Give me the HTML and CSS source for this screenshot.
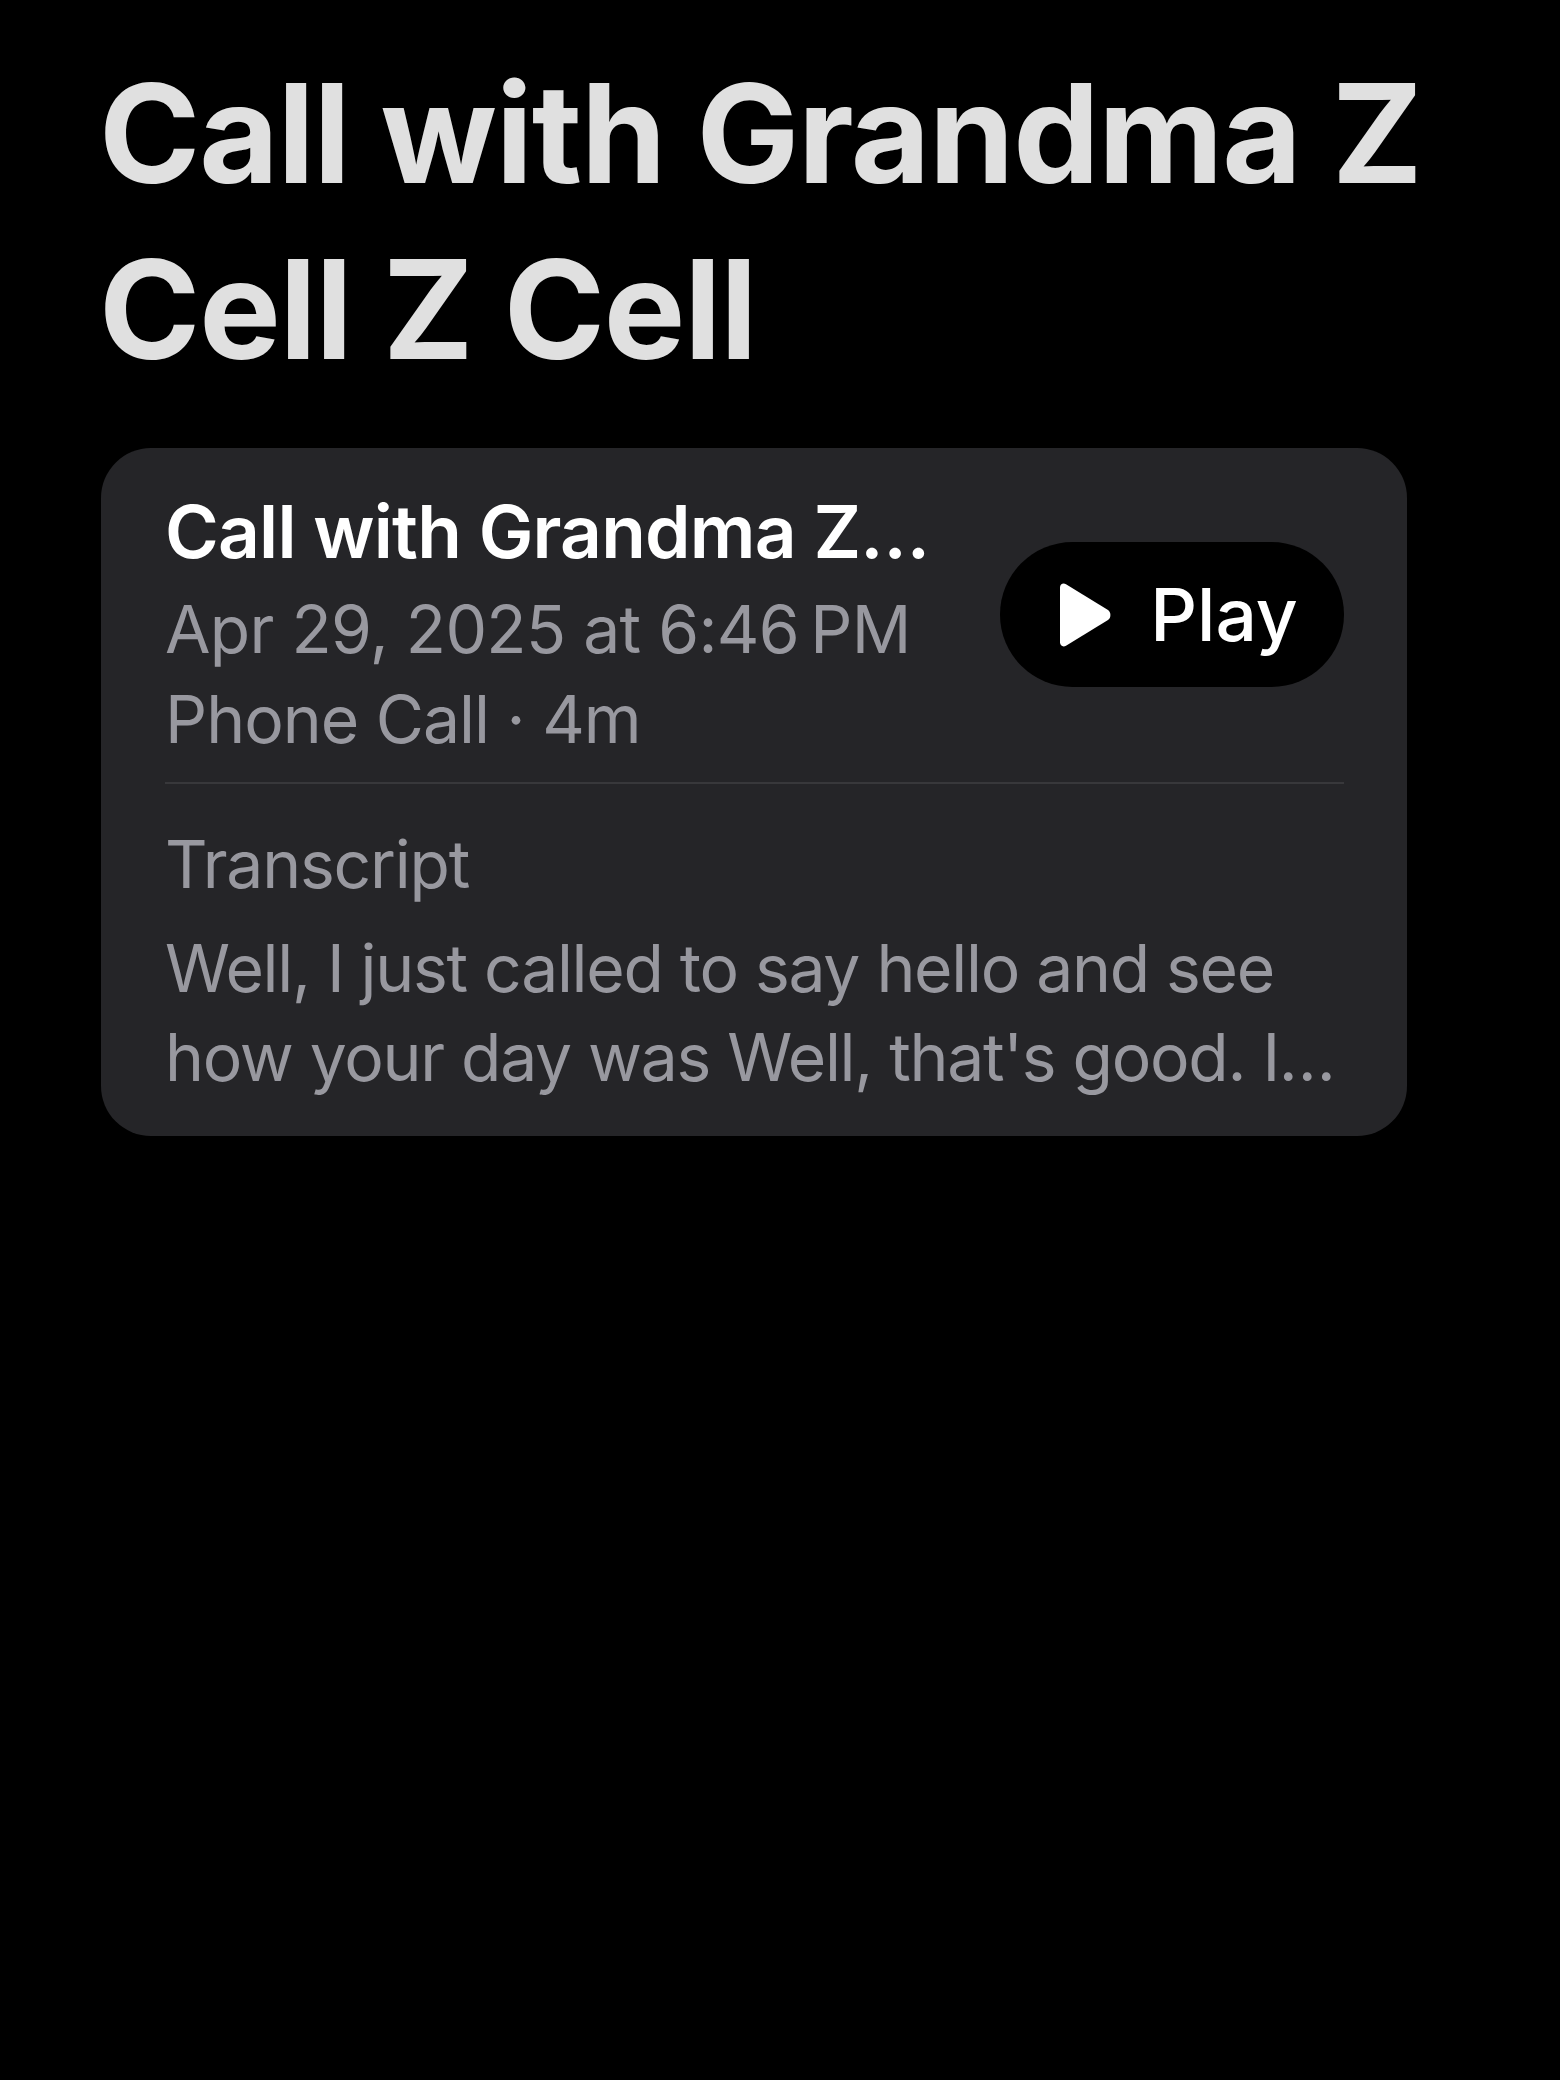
FILE: index.html
```html
<!DOCTYPE html>
<html lang="en">
<head>
<meta charset="utf-8">
<title>Call with Grandma Z Cell Z Cell</title>
<link rel="stylesheet" href="styles.css">
</head>
<body>
<main class="page">
  <h1 class="page-title">Call with Grandma Z Cell Z Cell</h1>
  <section class="call-card">
    <div class="call-header">
      <div class="call-info">
        <h2 class="call-title">Call with Grandma Z Cell Z Cell</h2>
        <p class="call-meta call-date">Apr 29, 2025 at 6:46&#8201;PM</p>
        <p class="call-meta">Phone Call · 4m</p>
      </div>
      <button class="play-button" type="button">
        <svg class="play-icon" viewBox="0 0 58 64" aria-hidden="true">
          <path d="M6 4.5 C6 1.2 9.2 -0.4 12 1.3 L54 27 C57.2 29 57.2 35 54 37 L12 62.7 C9.2 64.4 6 62.8 6 59.5 Z" fill="#ffffff"/>
        </svg>
        <span class="play-label">Play</span>
      </button>
    </div>
    <div class="divider"></div>
    <h3 class="transcript-label">Transcript</h3>
    <p class="transcript-text">Well, I just called to say hello and see how your day was Well, that's good. I…</p>
  </section>
</main>
</body>
</html>
```
FILE: styles.css
```css
html, body {
  margin: 0;
  padding: 0;
  background: #000000;
}

body {
  font-family: Inter, "Noto Sans", "Liberation Sans", sans-serif;
  -webkit-font-smoothing: antialiased;
}

.page {
  padding: 45px 90px 0 99px;
}

.page-title {
  margin: 0;
  font-size: 137px;
  line-height: 176px;
  font-weight: 700;
  letter-spacing: -1.2px;
  color: #e0e0e0;
}

.call-card {
  margin-top: 51px;
  margin-left: 2px;
  width: 1306px;
  box-sizing: border-box;
  background: #252528;
  border-radius: 50px;
  padding: 34px 63px 34px 64px;
}

.call-header {
  display: flex;
  align-items: flex-start;
  gap: 66px;
}

.call-info {
  flex: 1;
  min-width: 0;
}

.call-title {
  margin: 0;
  font-size: 73px;
  line-height: 100px;
  font-weight: 600;
  letter-spacing: -0.8px;
  color: #ffffff;
  white-space: nowrap;
  overflow: hidden;
  text-overflow: ellipsis;
}

.call-meta {
  margin: 0;
  font-size: 66px;
  line-height: 90px;
  font-weight: 400;
  letter-spacing: -1px;
  color: #98989f;
}

.call-date {
  margin-top: 2px;
  letter-spacing: -0.7px;
}

.play-button {
  flex: none;
  margin-top: 60px;
  width: 344px;
  height: 145px;
  border: none;
  border-radius: 73px;
  background: #000000;
  display: flex;
  align-items: center;
  justify-content: center;
  gap: 38px;
  padding: 0 0 0 8px;
  font-family: inherit;
  cursor: pointer;
}

.play-icon {
  width: 58px;
  height: 64px;
  display: block;
}

.play-label {
  font-size: 73px;
  line-height: 1;
  font-weight: 500;
  color: #ffffff;
}

.divider {
  margin-top: 18px;
  height: 2px;
  background: #38383b;
}

.transcript-label {
  margin: 35px 0 0;
  font-size: 66px;
  line-height: 90px;
  font-weight: 400;
  letter-spacing: -1.2px;
  color: #98989f;
}

.transcript-text {
  margin: 15px 0 0;
  font-size: 66px;
  line-height: 89px;
  font-weight: 400;
  letter-spacing: -1.3px;
  color: #98989f;
  display: -webkit-box;
  -webkit-box-orient: vertical;
  -webkit-line-clamp: 2;
  overflow: hidden;
}
```
